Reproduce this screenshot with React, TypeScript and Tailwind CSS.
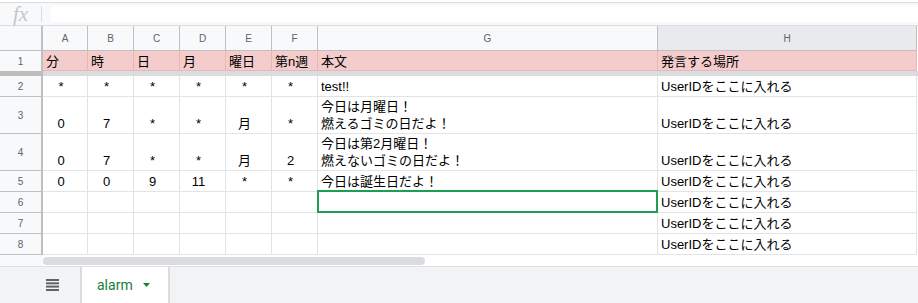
import React from "react";

const font = { fontFamily: '"Liberation Sans", "Noto Sans CJK JP", Arial, sans-serif' };

const widths = ["w-[45px]", "w-[46px]", "w-[46px]", "w-[46px]", "w-[46px]", "w-[46px]", "w-[340px]", "w-[259px]"];
const letters = ["A", "B", "C", "D", "E", "F", "G", "H"];
const U = "UserIDをここに入れる";

type Cell = string | string[];
const rows: { n: number; h: string; cells: Cell[] }[] = [
  { n: 2, h: "h-[21px]", cells: ["*", "*", "*", "*", "*", "*", "test!!", U] },
  { n: 3, h: "h-[37px]", cells: ["0", "7", "*", "*", "月", "*", ["今日は月曜日！", "燃えるゴミの日だよ！"], U] },
  { n: 4, h: "h-[37px]", cells: ["0", "7", "*", "*", "月", "2", ["今日は第2月曜日！", "燃えないゴミの日だよ！"], U] },
  { n: 5, h: "h-[21px]", cells: ["0", "0", "9", "11", "*", "*", "今日は誕生日だよ！", U] },
  { n: 6, h: "h-[21px]", cells: ["", "", "", "", "", "", "", U] },
  { n: 7, h: "h-[21px]", cells: ["", "", "", "", "", "", "", U] },
  { n: 8, h: "h-[21px]", cells: ["", "", "", "", "", "", "", U] },
];

const header = ["分", "時", "日", "月", "曜日", "第n週", "本文", "発言する場所"];

export default function App() {
  return (
    <div className="w-[918px] h-[303px] overflow-hidden bg-white text-[13px] text-black" style={font}>
      {/* formula bar */}
      <div className="h-[2px] bg-white" />
      <div className="h-[24px] bg-[#f8f9fa] border-t border-b border-[#dadce0] flex items-center">
        <div className="w-[42px] h-[16px] flex items-center justify-center border-r border-[#dadce0]">
          <span className="text-[#c4c7c5] italic text-[21px] leading-none" style={{ fontFamily: '"Liberation Serif", serif' }}>fx</span>
        </div>
        <div className="ml-[9px] flex-1 h-[16px] bg-white" />
      </div>
      {/* column header row */}
      <div className="flex h-[25px]">
        <div className="w-[43px] h-full bg-[#f8f9fa] border-r-2 border-b border-[#c0c0c0]" />
        {letters.map((l, i) => (
          <div
            key={l}
            className={`${widths[i]} h-full border-r border-b border-[#c0c0c0] flex items-center justify-center text-[10px] text-[#5f6368] ${l === "H" ? "bg-[#e8eaed]" : "bg-[#f8f9fa]"}`}
          >
            {l}
          </div>
        ))}
      </div>
      {/* row 1 */}
      <div className="flex h-[20px]">
        <div className="w-[43px] h-full bg-[#f8f9fa] border-r-2 border-[#c0c0c0] flex items-center justify-center text-[10px] text-[#5f6368]">1</div>
        {header.map((t, i) => (
          <div key={i} className={`${widths[i]} h-full bg-[#f4cccc] border-r border-b border-[#e6b8b8] flex items-end pl-[3px] leading-[17px] whitespace-nowrap`}>
            {t}
          </div>
        ))}
      </div>
      {/* freeze band */}
      <div className="flex h-[5px]">
        <div className="w-[43px] h-full bg-[#bdbdbd]" />
        <div className="flex-1 h-full bg-[#dadce0]" />
      </div>
      {rows.map((r) => (
        <div key={r.n} className={`flex ${r.h}`}>
          <div className="w-[43px] h-full bg-[#f8f9fa] border-r-2 border-b border-[#c0c0c0] flex items-center justify-center text-[10px] text-[#5f6368]">
            {r.n}
          </div>
          {r.cells.map((c, i) => (
            <div
              key={i}
              className={`${widths[i]} h-full relative border-r border-b border-[#e2e3e3] flex flex-col justify-end pb-[1px] leading-[17px] whitespace-nowrap ${i < 6 ? "items-center pr-[8px]" : "items-start pl-[3px]"}`}
            >
              {Array.isArray(c) ? c.map((line, k) => <span key={k}>{line}</span>) : <span>{c}</span>}
              {r.n === 6 && i === 6 && (
                <div className="absolute -left-px -top-[2px] -right-px -bottom-px border-2 border-[#1f9d55]" />
              )}
            </div>
          ))}
        </div>
      ))}
      {/* scrollbar area */}
      <div className="flex h-[11px]">
        <div className="w-[43px] h-full bg-[#f8f9fa]" />
        <div className="flex-1 h-full bg-white flex items-center">
          <div className="w-[382px] h-[8px] rounded-full bg-[#dadce0]" />
        </div>
      </div>
      {/* tab bar */}
      <div className="h-[37px] bg-[#f1f3f4] border-t border-[#e0e0e0] flex">
        <div className="w-[80px] h-full flex items-center pl-[46px]">
          <svg width="13" height="12" viewBox="0 0 13 12">
            <rect x="0" y="0" width="13" height="2" fill="#5f6368" />
            <rect x="0" y="3.3" width="13" height="2" fill="#5f6368" />
            <rect x="0" y="6.6" width="13" height="2" fill="#5f6368" />
            <rect x="0" y="10" width="13" height="2" fill="#5f6368" />
          </svg>
        </div>
        <div className="w-[90px] h-full bg-white border-l-2 border-r-2 border-[#dcdcdc] flex items-center pl-[15px]">
          <span className="text-[14px] text-[#188038]" style={{ fontFamily: '"Roboto", "Liberation Sans", sans-serif' }}>alarm</span>
          <svg className="ml-[10px]" width="7" height="4" viewBox="0 0 7 4">
            <path d="M0 0 L7 0 L3.5 4 Z" fill="#188038" />
          </svg>
        </div>
      </div>
    </div>
  );
}
